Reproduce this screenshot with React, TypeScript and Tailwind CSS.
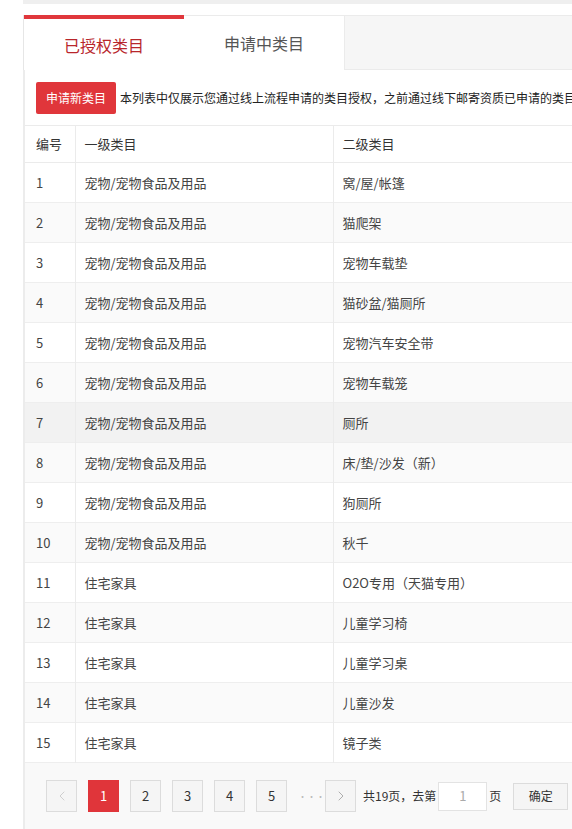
import { ChevronLeft, ChevronRight } from "lucide-react";

const rows: [string, string][] = [
  ["宠物/宠物食品及用品", "窝/屋/帐篷"],
  ["宠物/宠物食品及用品", "猫爬架"],
  ["宠物/宠物食品及用品", "宠物车载垫"],
  ["宠物/宠物食品及用品", "猫砂盆/猫厕所"],
  ["宠物/宠物食品及用品", "宠物汽车安全带"],
  ["宠物/宠物食品及用品", "宠物车载笼"],
  ["宠物/宠物食品及用品", "厕所"],
  ["宠物/宠物食品及用品", "床/垫/沙发（新）"],
  ["宠物/宠物食品及用品", "狗厕所"],
  ["宠物/宠物食品及用品", "秋千"],
  ["住宅家具", "O2O专用（天猫专用）"],
  ["住宅家具", "儿童学习椅"],
  ["住宅家具", "儿童学习桌"],
  ["住宅家具", "儿童沙发"],
  ["住宅家具", "镜子类"],
];

const font = "font-['Microsoft_YaHei','Noto_Sans_CJK_SC',sans-serif]";

export default function App() {
  return (
    <div className={`w-[572px] h-[829px] overflow-hidden bg-white ${font}`}>
      <div className="ml-[23px] w-[620px]">
        <div className="h-[4px] bg-[#efefef]" />
        <div className="h-[11px]" />

        {/* tabs */}
        <div className="flex h-[55px] border-l border-[#e6e6e6]">
          <div className="w-[160px] border-t-4 border-[#e0373c] bg-white flex items-center justify-center text-[16px] text-[#b8262b]">
            已授权类目
          </div>
          <div className="w-[161px] border-t border-r border-[#ebebeb] bg-white flex items-center justify-center text-[16px] text-[#555]">
            申请中类目
          </div>
          <div className="flex-1 bg-[#f6f6f6] border-t border-b border-[#ebebeb]" />
        </div>

        <div className="border-l-2 border-[#ececec] bg-white">
          {/* notice */}
          <div className="flex items-center h-[55px] pl-[11px] whitespace-nowrap">
            <button className="h-[32px] px-[10px] rounded-[2px] bg-[#e0363b] text-white text-[12px]">
              申请新类目
            </button>
            <span className="ml-[4px] text-[12px] text-[#222]">
              本列表中仅展示您通过线上流程申请的类目授权，之前通过线下邮寄资质已申请的类目
            </span>
          </div>

          {/* table */}
          <table className="w-full border-collapse text-[13px] text-[#444]">
            <thead>
              <tr className="h-[37px] border-t border-b border-[#ebebeb] bg-white">
                <th className="w-[50px] pl-[11px] text-left font-normal text-[#333] border-r border-[#ebebeb]">编号</th>
                <th className="w-[258px] pl-[9px] text-left font-normal text-[#333] border-r border-[#ebebeb]">一级类目</th>
                <th className="pl-[9px] text-left font-normal text-[#333]">二级类目</th>
              </tr>
            </thead>
            <tbody>
              {rows.map(([a, b], i) => (
                <tr
                  key={i}
                  className={`h-[40px] border-b border-[#eeeeee] ${
                    i === 6 ? "bg-[#f2f2f2]" : i % 2 === 1 ? "bg-[#fafafa]" : "bg-white"
                  }`}
                >
                  <td className="pl-[11px] border-r border-[#ebebeb]">{i + 1}</td>
                  <td className="pl-[9px] border-r border-[#ebebeb]">{a}</td>
                  <td className="pl-[9px]">{b}</td>
                </tr>
              ))}
            </tbody>
          </table>

          {/* pagination */}
          <div className="flex items-center h-[66px] bg-[#f9f9f9] pl-[21px] text-[13px] text-[#333]">
            <div className="flex items-center gap-[11px]">
              <span className="w-[31px] h-[32px] flex items-center justify-center border border-[#dcdcdc] bg-[#f5f5f5] text-[#bbb]">
                <ChevronLeft className="w-4 h-4" strokeWidth={1} />
              </span>
              <span className="w-[31px] h-[32px] flex items-center justify-center bg-[#e0353a] text-white">1</span>
              {[2, 3, 4, 5].map((n) => (
                <span key={n} className="w-[31px] h-[32px] flex items-center justify-center border border-[#dcdcdc] bg-[#f5f5f5]">
                  {n}
                </span>
              ))}
              <span className="w-[16px] text-center text-[#bbb] text-[9px] leading-none">···</span>
              <span className="w-[31px] h-[32px] flex items-center justify-center border border-[#dcdcdc] bg-[#f5f5f5] text-[#888]">
                <ChevronRight className="w-4 h-4" strokeWidth={1} />
              </span>
            </div>
            <span className="ml-[7px] whitespace-nowrap text-[12px]">共19页，去第</span>
            <span className="ml-[2px] w-[49px] h-[29px] flex items-center justify-center border border-[#e3e3e3] bg-white text-[#aaa]">1</span>
            <span className="ml-[2px] text-[12px]">页</span>
            <span className="ml-[12px] w-[55px] h-[27px] flex items-center justify-center border border-[#dcdcdc] bg-[#f5f5f5] text-[12px]">
              确定
            </span>
          </div>
        </div>
      </div>
    </div>
  );
}
